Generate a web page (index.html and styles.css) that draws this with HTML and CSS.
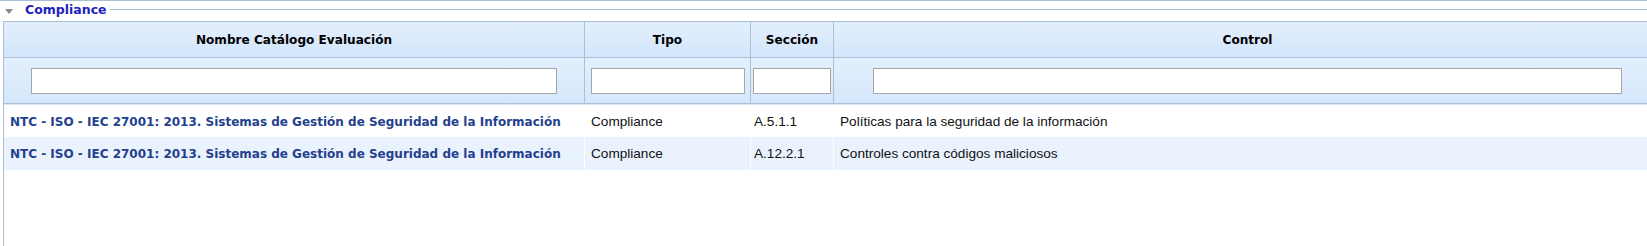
FILE: index.html
```html
<!DOCTYPE html>
<html lang="es">
<head>
    <meta charset="UTF-8">
    <meta name="viewport" content="width=device-width, initial-scale=1.0">
    <title>Compliance</title>
    <link rel="stylesheet" href="styles.css">
</head>
<body>
    <div class="top-line"></div>

    <!-- Group header -->
    <div class="group-head">
        <svg class="toggle" width="8" height="5" viewBox="0 0 8 5"><path d="M0 0 H8 L4 5 Z" fill="#8a8a8a"/></svg>
        <span class="group-title">Compliance</span>
        <span class="group-line"></span>
    </div>

    <div class="group-body">
        <table class="grid">
            <colgroup>
                <col class="c-name">
                <col class="c-type">
                <col class="c-sec">
                <col class="c-ctrl">
            </colgroup>
            <thead>
                <tr class="head-row">
                    <th>Nombre Catálogo Evaluación</th>
                    <th>Tipo</th>
                    <th>Sección</th>
                    <th>Control</th>
                </tr>
                <tr class="filter-row">
                    <th><input type="text" class="f-name"></th>
                    <th><input type="text" class="f-type"></th>
                    <th><input type="text" class="f-sec"></th>
                    <th><input type="text" class="f-ctrl"></th>
                </tr>
            </thead>
            <tbody>
                <tr class="first">
                    <td class="cat"><a href="#">NTC - ISO - IEC 27001: 2013. Sistemas de Gestión de Seguridad de la Información</a></td>
                    <td>Compliance</td>
                    <td class="sec">A.5.1.1</td>
                    <td>Políticas para la seguridad de la información</td>
                </tr>
                <tr class="alt">
                    <td class="cat"><a href="#">NTC - ISO - IEC 27001: 2013. Sistemas de Gestión de Seguridad de la Información</a></td>
                    <td>Compliance</td>
                    <td class="sec">A.12.2.1</td>
                    <td>Controles contra códigos maliciosos</td>
                </tr>
            </tbody>
        </table>
    </div>
</body>
</html>
```

FILE: styles.css
```css
body {
    margin: 0;
    padding: 0;
    background: #fff;
    overflow: hidden;
    font-family: "Liberation Sans", Arial, sans-serif;
}

.top-line {
    border-top: 1px solid #abc0d3;
}

.group-head {
    display: flex;
    align-items: flex-start;
    height: 20px;
}

.toggle {
    margin: 8px 0 0 5px;
}

.group-title {
    margin: 1px 0 0 12px;
    font-family: "DejaVu Sans", sans-serif;
    font-weight: bold;
    font-size: 12.5px;
    line-height: 16px;
    color: #1f1fc0;
}

.group-line {
    flex: 1;
    margin: 8px 0 0 3px;
    border-top: 1px solid #abc0d3;
}

.group-body {
    margin-left: 3px;
    border-left: 1px solid #abc0d3;
    height: 230px;
}

.grid {
    border-collapse: separate;
    border-spacing: 0;
    table-layout: fixed;
    width: 1658px;
}

.c-name { width: 581px; }
.c-type { width: 166px; }
.c-sec { width: 83px; }
.c-ctrl { width: 828px; }

.grid th {
    padding: 0;
    border-right: 1px solid #abc0d3;
    border-bottom: 1px solid #abc0d3;
    text-align: center;
}

.head-row th {
    height: 35px;
    border-top: 1px solid #abc0d3;
    background: linear-gradient(#e3effd, #d3e5fb);
    font-family: "DejaVu Sans", sans-serif;
    font-weight: bold;
    font-size: 12.1px;
    color: #000;
}

.filter-row th {
    height: 45px;
    background: linear-gradient(#e3effd, #d5e7fb);
}

.filter-row input {
    display: block;
    margin: 1px auto 0;
    box-sizing: border-box;
    height: 26px;
    border: 1px solid #a6a6a6;
    background: #fff;
    padding: 0 4px;
}

.f-name { width: 526px; }
.f-type { width: 154px; }
.f-sec { width: 78px; }
.f-ctrl { width: 749px; }

.grid td {
    height: 33px;
    padding: 0 0 0 6px;
    border-right: 1px solid #fff;
    font-size: 13.6px;
    color: #111;
    white-space: nowrap;
    overflow: hidden;
}

.grid td.sec {
    padding-left: 3px;
}

.grid tr.first td {
    height: 32px;
    border-top: 1px solid #d8e5f3;
}

.grid tr.alt td {
    background: #eaf2fd;
}

.cat a {
    font-family: "DejaVu Sans", sans-serif;
    font-weight: bold;
    font-size: 12px;
    color: #243f8e;
    text-decoration: none;
}
```
